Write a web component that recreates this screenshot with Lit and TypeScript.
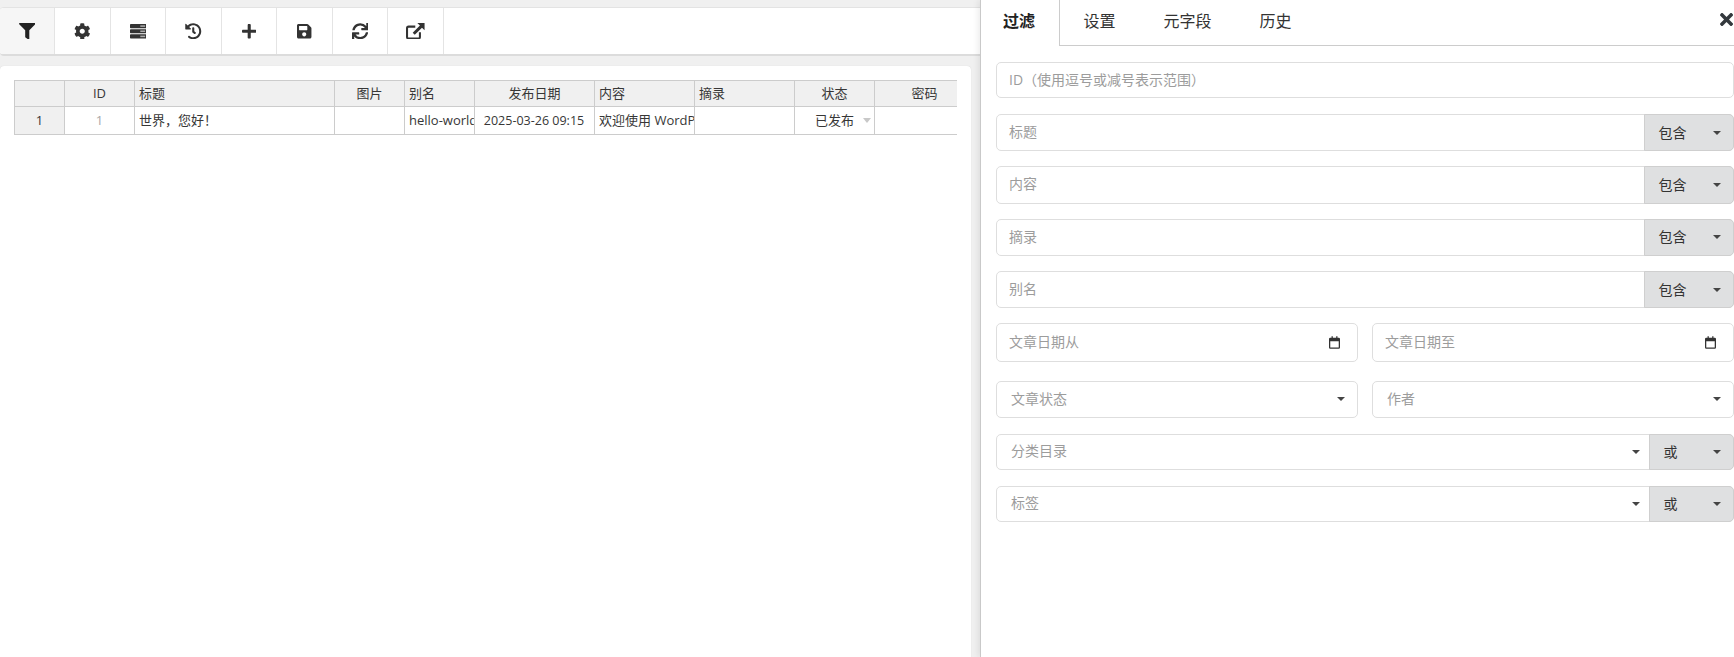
import { LitElement, html, css, svg } from "lit";
import { customElement } from "lit/decorators.js";

const icons: [string, unknown][] = [
  ["0 0 512 512", svg`<path d="M487.976 0H24.028C2.71 0-8.047 25.866 7.058 40.971L192 225.941V432c0 7.831 3.821 15.17 10.237 19.662l80 55.98C298.02 518.69 320 507.493 320 487.98V225.941l184.947-184.97C520.021 25.896 509.338 0 487.976 0z"/>`],
  ["0 0 512 512", svg`<path d="M487.4 315.7l-42.6-24.6c4.3-23.2 4.3-47 0-70.2l42.6-24.6c4.9-2.8 7.1-8.6 5.5-14-11.1-35.6-30-67.8-54.7-94.6-3.8-4.1-10-5.1-14.8-2.3L380.8 110c-17.9-15.4-38.5-27.3-60.8-35.1V25.8c0-5.6-3.9-10.5-9.4-11.7-36.7-8.2-74.3-7.8-109.2 0-5.5 1.2-9.4 6.1-9.4 11.7V75c-22.2 7.9-42.8 19.8-60.8 35.1L88.7 85.5c-4.9-2.8-11-1.9-14.8 2.3-24.7 26.7-43.6 58.9-54.7 94.6-1.7 5.4.6 11.2 5.5 14L67.3 221c-4.3 23.2-4.3 47 0 70.2l-42.6 24.6c-4.9 2.8-7.1 8.6-5.5 14 11.1 35.6 30 67.8 54.7 94.6 3.8 4.1 10 5.1 14.8 2.3l42.6-24.6c17.9 15.4 38.5 27.3 60.8 35.1v49.2c0 5.6 3.9 10.5 9.4 11.7 36.7 8.2 74.3 7.8 109.2 0 5.5-1.2 9.4-6.1 9.4-11.7v-49.2c22.2-7.9 42.8-19.8 60.8-35.1l42.6 24.6c4.9 2.8 11 1.9 14.8-2.3 24.7-26.7 43.6-58.9 54.7-94.6 1.5-5.5-.7-11.3-5.6-14.1zM256 336c-44.1 0-80-35.9-80-80s35.9-80 80-80 80 35.9 80 80-35.9 80-80 80z"/>`],
  ["0 0 512 512", svg`<rect y="32" width="512" height="128" rx="24"/><rect y="192" width="512" height="128" rx="24"/><rect y="352" width="512" height="128" rx="24"/><g fill="#aaa"><rect x="320" y="72" width="150" height="48"/><rect x="320" y="232" width="150" height="48"/><rect x="320" y="392" width="150" height="48"/></g>`],
  ["0 0 512 512", svg`<path d="M504 255.531c.253 136.64-111.18 248.372-247.82 248.468-59.015.042-113.223-20.53-155.822-54.911-11.077-8.94-11.905-25.541-1.839-35.607l11.267-11.267c8.609-8.609 22.353-9.551 31.891-1.984C173.062 425.135 212.781 440 256 440c101.705 0 184-82.311 184-184 0-101.705-82.311-184-184-184-48.814 0-93.149 18.969-126.068 49.932l50.754 50.754c10.08 10.08 2.941 27.314-11.313 27.314H24c-8.837 0-16-7.163-16-16V38.627c0-14.254 17.234-21.393 27.314-11.314l49.372 49.372C129.209 34.136 189.552 8 256 8c136.81 0 247.747 110.78 248 247.531zm-180.912 78.784l9.823-12.63c8.138-10.463 6.253-25.542-4.21-33.679L288 256.349V152c0-13.255-10.745-24-24-24h-16c-13.255 0-24 10.745-24 24v135.651l65.409 50.874c10.463 8.137 25.541 6.253 33.679-4.21z"/>`],
  ["0 0 448 512", svg`<path d="M416 208H272V64c0-17.67-14.33-32-32-32h-32c-17.67 0-32 14.33-32 32v144H32c-17.67 0-32 14.33-32 32v32c0 17.67 14.33 32 32 32h144v144c0 17.67 14.33 32 32 32h32c17.67 0 32-14.33 32-32V304h144c17.67 0 32-14.33 32-32v-32c0-17.67-14.33-32-32-32z"/>`],
  ["0 0 448 512", svg`<path d="M433.941 129.941l-83.882-83.882A48 48 0 0 0 316.118 32H48C21.49 32 0 53.49 0 80v352c0 26.51 21.49 48 48 48h352c26.51 0 48-21.49 48-48V163.882a48 48 0 0 0-14.059-33.941zM224 416c-35.346 0-64-28.654-64-64 0-35.346 28.654-64 64-64s64 28.654 64 64c0 35.346-28.654 64-64 64zm96-304.52V212c0 6.627-5.373 12-12 12H76c-6.627 0-12-5.373-12-12V108c0-6.627 5.373-12 12-12h228.52c3.183 0 6.235 1.264 8.485 3.515l3.48 3.48A11.996 11.996 0 0 1 320 111.48z"/>`],
  ["0 0 512 512", svg`<path d="M440.65 12.57l4 82.77A247.16 247.16 0 0 0 255.83 8C134.73 8 33.91 94.92 12.29 209.82A12 12 0 0 0 24.09 224h49.05a12 12 0 0 0 11.67-9.26 175.91 175.91 0 0 1 317-56.94l-101.46-4.86a12 12 0 0 0-12.57 12v47.41a12 12 0 0 0 12 12H500a12 12 0 0 0 12-12V12a12 12 0 0 0-12-12h-47.37a12 12 0 0 0-11.98 12.57zM255.83 432a175.61 175.61 0 0 1-146-77.8l101.8 4.87a12 12 0 0 0 12.57-12v-47.4a12 12 0 0 0-12-12H12a12 12 0 0 0-12 12V500a12 12 0 0 0 12 12h47.35a12 12 0 0 0 12-12.6l-4.15-82.57A247.17 247.17 0 0 0 255.83 504c121.11 0 221.93-86.92 243.55-201.82a12 12 0 0 0-11.8-14.18h-49.05a12 12 0 0 0-11.67 9.26A175.86 175.86 0 0 1 255.83 432z"/>`],
  ["0 0 18 16", svg`<path fill="none" stroke="currentColor" stroke-width="2" d="M9 3.500H2.500A1.500 1.500 0 0 0 1 5v8.500A1.500 1.500 0 0 0 2.500 15H12a1.500 1.500 0 0 0 1.500-1.500V9"/><path d="M11 0h7v7l-2.500-2.500L8.500 11.500 6.500 9.500 13.500 2.500z"/>`],
];

const caret = html`<span class="caret"></span>`;
const calendar = html`<svg class="cal" viewBox="0 0 13 15"><path d="M3 0v2H1.500A1.500 1.500 0 0 0 0 3.500v10A1.500 1.500 0 0 0 1.500 15h10a1.500 1.500 0 0 0 1.500-1.500v-10A1.500 1.500 0 0 0 11.500 2H10V0H8.500v2h-4V0zM1.500 6h10v7.500h-10z"/></svg>`;

@customElement("app-root")
export class AppRoot extends LitElement {
  static styles = css`
    :host {
      display: flex;
      width: 1734px;
      height: 657px;
      overflow: hidden;
      background: #f0f0f0;
      font-family: "Open Sans", "Noto Sans CJK SC", sans-serif;
      font-size: 13px;
      color: #373737;
    }
    .main {
      width: 980px;
      flex: none;
      padding-top: 7px;
      display: flex;
      flex-direction: column;
      box-sizing: border-box;
    }
    .toolbar {
      flex: none;
      display: flex;
      background: #fff;
      border-top: 1px solid #e3e3e3;
      border-bottom: 2px solid #dcdcdc;
      border-radius: 4px 0 0 4px;
      box-sizing: border-box;
      height: 49px;
      overflow: hidden;
    }
    .tool {
      width: 55.450px;
      flex: none;
      box-sizing: border-box;
      border-right: 1px solid #e4e4e4;
      display: flex;
      align-items: center;
      justify-content: center;
      color: #333;
    }
    .tool.active {
      background: #f6f6f6;
      color: #222;
    }
    .tool svg {
      height: 16.500px;
      fill: currentColor;
      display: block;
    }
    .card {
      flex: 1;
      margin: 10px 9px 0 0;
      background: #fff;
      border-radius: 4px 4px 0 0;
      box-shadow: 0 0 1px rgba(0, 0, 0, 0.15);
      padding: 14px 13px 0 14px;
      box-sizing: border-box;
      overflow: hidden;
    }
    .table {
      display: grid;
      grid-template-columns: 50px 70px 200px 70px 70px 120px 100px 100px 80px 100px;
      grid-template-rows: 26px 28px;
      width: 943px;
      overflow: hidden;
      border-top: 1px solid #ccc;
      border-left: 1px solid #ccc;
      box-sizing: border-box;
      line-height: 25px;
      font-size: 13px;
    }
    .c {
      box-sizing: border-box;
      border-right: 1px solid #ccc;
      border-bottom: 1px solid #ccc;
      padding: 0 4px;
      white-space: nowrap;
      overflow: hidden;
    }
    .h {
      background: #f0f0f0;
    }
    .ctr {
      text-align: center;
    }
    .mute {
      color: #a8a8a8;
    }
    .body {
      line-height: 27px;
    }
    .date-cell {
      font-size: 12.500px;
      padding-right: 5px;
    }
    .status {
      display: flex;
      align-items: center;
      justify-content: center;
      gap: 9px;
      padding: 0 0 0 17px;
    }
    .status i {
      width: 0;
      height: 0;
      border: 4.500px solid transparent;
      border-top: 5px solid #c8c8c8;
      border-bottom: 0;
    }
    .panel {
      flex: 1;
      min-width: 0;
      position: relative;
      background: #fff;
      border-left: 1px solid #c9c9c9;
      box-shadow: -2px 0 6px rgba(0, 0, 0, 0.08);
      display: flex;
      flex-direction: column;
    }
    .tabs {
      height: 46px;
      flex: none;
      display: flex;
      box-sizing: border-box;
      border-bottom: 1px solid #ccc;
      font-size: 16px;
      color: #333;
    }
    .tab {
      padding: 0 24px 3px;
      line-height: 42px;
    }
    .tab.on {
      font-weight: 700;
      color: #222;
      margin-bottom: -1px;
      background: #fff;
      border-right: 1px solid #ccc;
      padding-left: 22px;
      padding-right: 23.500px;
    }
    .close {
      margin: 10px 1px 0 auto;
      height: 19px;
      fill: #33383d;
    }
    .form {
      padding: 16px 0.500px 0 15px;
      display: flex;
      flex-direction: column;
      font-size: 14px;
      color: #9c9c9c;
    }
    .field {
      box-sizing: border-box;
      border: 1px solid #dedede;
      border-radius: 5px;
      height: 37.300px;
      display: flex;
      align-items: center;
      padding-left: 12px;
      min-width: 0;
      margin-bottom: 15px;
      background: #fff;
      flex: none;
    }
    .t {
      margin-bottom: 3px;
    }
    .first .t {
      margin-bottom: 2px;
    }
    .field.first {
      height: 36px;
      margin-bottom: 16px;
    }
    .field.date {
      flex: 1;
      height: 38.500px;
      margin-bottom: 19px;
    }
    .field.sel {
      flex: 1;
      height: 37px;
      margin-bottom: 16px;
      padding-left: 14px;
    }
    .field.tax {
      height: 36px;
      margin-bottom: 16px;
      padding-left: 14px;
    }
    .row {
      display: flex;
      gap: 14.500px;
    }
    .cal {
      width: 11px;
      height: 13px;
      margin: 0 17px 0 auto;
      fill: #333;
    }
    .caret {
      width: 0;
      height: 0;
      border: 4px solid transparent;
      border-top: 4.500px solid #444;
      border-bottom: 0;
    }
    .sel > .caret {
      margin: 0 12px 0 auto;
    }
    .tax > .caret {
      margin: 0 9px 0 auto;
    }
    .addon {
      align-self: stretch;
      width: 90px;
      margin: -1px -1px -1px auto;
      flex: none;
      box-sizing: border-box;
      background: #dfe0e1;
      border: 1px solid #cfcfcf;
      border-radius: 0 5px 5px 0;
      color: #333;
      font-size: 14px;
      display: flex;
      align-items: center;
      padding: 0 12px 0 14px;
    }
    .addon .t {
      margin-bottom: 2px;
    }
    .addon .caret {
      margin-left: auto;
    }
    .addon.short {
      width: 85px;
      margin-left: 0;
    }
  `;

  render() {
    const cols = ["", "ID", "标题", "图片", "别名", "发布日期", "内容", "摘录", "状态", "密码"];
    const leftHead = new Set(["标题", "别名", "内容", "摘录"]);
    return html`
      <div class="main">
        <div class="toolbar">
          ${icons.map(
            ([vb, body], i) => html`<div class="tool ${i === 0 ? "active" : ""}"><svg viewBox=${vb}>${body}</svg></div>`
          )}
        </div>
        <div class="card">
          <div class="table">
            ${cols.map((c) => html`<div class="c h ${leftHead.has(c) ? "" : "ctr"}">${c}</div>`)}
            <div class="c h ctr body">1</div>
            <div class="c ctr mute body">1</div>
            <div class="c body">世界，您好！</div>
            <div class="c body"></div>
            <div class="c body">hello-world</div>
            <div class="c ctr body date-cell">2025-03-26 09:15</div>
            <div class="c body">欢迎使用 WordP</div>
            <div class="c body"></div>
            <div class="c status body">已发布<i></i></div>
            <div class="c body"></div>
          </div>
        </div>
      </div>
      <div class="panel">
        <div class="tabs">
          <div class="tab on">过滤</div>
          <div class="tab">设置</div>
          <div class="tab">元字段</div>
          <div class="tab">历史</div>
          <svg class="close" viewBox="0 0 352 512"><path d="M242.72 256l100.07-100.07c12.28-12.28 12.28-32.19 0-44.48l-22.24-22.24c-12.28-12.28-32.19-12.28-44.48 0L176 189.28 75.93 89.21c-12.28-12.28-32.19-12.28-44.48 0L9.21 111.45c-12.28 12.28-12.28 32.19 0 44.48L109.28 256 9.21 356.07c-12.28 12.28-12.28 32.19 0 44.48l22.24 22.24c12.28 12.28 32.2 12.28 44.48 0L176 322.72l100.07 100.07c12.28 12.28 32.2 12.28 44.48 0l22.24-22.24c12.28-12.28 12.28-32.19 0-44.48L242.72 256z"/></svg>
        </div>
        <div class="form">
          <div class="field first"><span class="t">ID（使用逗号或减号表示范围）</span></div>
          ${["标题", "内容", "摘录", "别名"].map(
            (t) => html`<div class="field"><span class="t">${t}</span><div class="addon"><span class="t">包含</span>${caret}</div></div>`
          )}
          <div class="row">
            <div class="field date"><span class="t">文章日期从</span>${calendar}</div>
            <div class="field date"><span class="t">文章日期至</span>${calendar}</div>
          </div>
          <div class="row">
            <div class="field sel"><span class="t">文章状态</span>${caret}</div>
            <div class="field sel"><span class="t">作者</span>${caret}</div>
          </div>
          ${["分类目录", "标签"].map(
            (t) => html`<div class="field tax"><span class="t">${t}</span>${caret}<div class="addon short"><span class="t">或</span>${caret}</div></div>`
          )}
        </div>
      </div>
    `;
  }
}
